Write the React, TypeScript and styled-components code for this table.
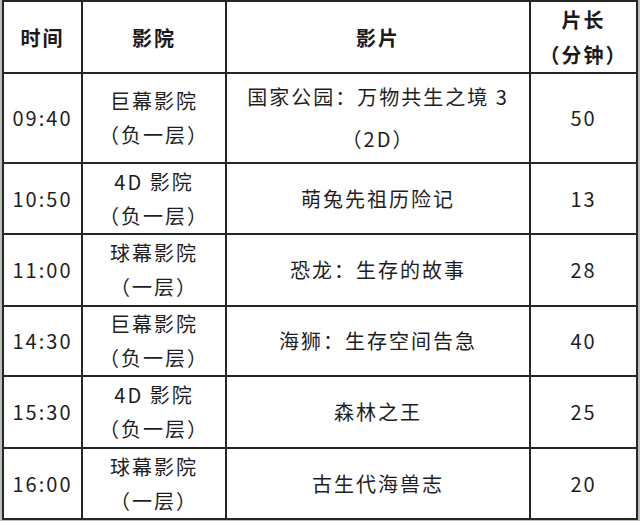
import React from "react";
import styled, { createGlobalStyle } from "styled-components";

const Global = createGlobalStyle`
  html, body { margin: 0; padding: 0; }
  html { background: #b9c2b6; }
  body {
    background: #b9c2b6;
    font-family: "Noto Sans CJK SC", "Noto Sans", sans-serif;
    color: #1e1e1e;
  }
`;

const Page = styled.div`
  width: 640px;
  height: 521px;
  background: #b9c2b6;
  overflow: hidden;
`;

const Table = styled.table`
  margin: 0 0 0 2px;
  width: 636px;
  border-collapse: collapse;
  background: #ffffff;
  table-layout: fixed;
`;

const Row = styled.tr<{ $h: number }>`
  height: ${(p) => p.$h}px;
`;

const HeadCell = styled.th<{ $w?: number }>`
  ${(p) => (p.$w ? `width: ${p.$w}px;` : "")}
  border: 2px solid #262626;
  padding: 0;
  font-size: 20px;
  font-weight: 700;
  letter-spacing: 2px;
  line-height: 35px;
  text-align: center;
  vertical-align: middle;
  color: #1a1a1a;
`;

const Cell = styled.td<{ $lh?: number }>`
  border: 2px solid #262626;
  padding: 0;
  font-size: 20px;
  font-weight: 400;
  letter-spacing: 2px;
  line-height: ${(p) => p.$lh ?? 34}px;
  text-align: center;
  vertical-align: middle;
  color: #1e1e1e;
`;

const Line = styled.span`
  display: block;
  white-space: nowrap;
`;

type Show = {
  time: string;
  hall: string[];
  film: string[];
  len: string;
  h: number;
  filmLh?: number;
};

const shows: Show[] = [
  { time: "09:40", hall: ["巨幕影院", "（负一层）"], film: ["国家公园：万物共生之境 3", "（2D）"], len: "50", h: 90, filmLh: 42 },
  { time: "10:50", hall: ["4D 影院", "（负一层）"], film: ["萌兔先祖历险记"], len: "13", h: 71 },
  { time: "11:00", hall: ["球幕影院", "（一层）"], film: ["恐龙：生存的故事"], len: "28", h: 72 },
  { time: "14:30", hall: ["巨幕影院", "（负一层）"], film: ["海狮：生存空间告急"], len: "40", h: 70 },
  { time: "15:30", hall: ["4D 影院", "（负一层）"], film: ["森林之王"], len: "25", h: 72 },
  { time: "16:00", hall: ["球幕影院", "（一层）"], film: ["古生代海兽志"], len: "20", h: 71 },
];

export default function App() {
  return (
    <Page>
      <Global />
      <Table>
        <thead>
          <Row $h={71}>
            <HeadCell $w={77}>时间</HeadCell>
            <HeadCell $w={142}>影院</HeadCell>
            <HeadCell $w={302}>影片</HeadCell>
            <HeadCell>
              <Line>片长</Line>
              <Line>（分钟）</Line>
            </HeadCell>
          </Row>
        </thead>
        <tbody>
          {shows.map((s) => (
            <Row $h={s.h} key={s.time}>
              <Cell>{s.time}</Cell>
              <Cell>
                {s.hall.map((l) => (
                  <Line key={l}>{l}</Line>
                ))}
              </Cell>
              <Cell $lh={s.filmLh}>
                {s.film.map((l) => (
                  <Line key={l}>{l}</Line>
                ))}
              </Cell>
              <Cell>{s.len}</Cell>
            </Row>
          ))}
        </tbody>
      </Table>
    </Page>
  );
}
